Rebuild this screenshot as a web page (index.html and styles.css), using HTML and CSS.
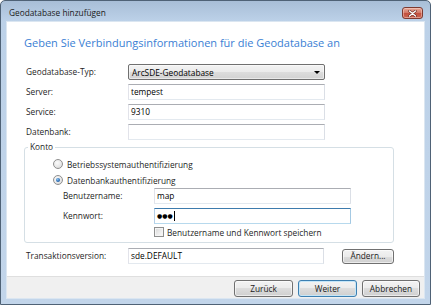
FILE: index.html
```html
<!DOCTYPE html>
<html lang="de">
<head>
<meta charset="utf-8">
<title>Geodatabase hinzufügen</title>
<link rel="stylesheet" href="styles.css">
</head>
<body>
<div class="window">
  <div class="titlebar">
    <span class="title">Geodatabase hinzufügen</span>
    <span class="close">
      <svg width="9" height="7" viewBox="0 0 9 7"><path d="M1.5 1 L7.5 6 M7.5 1 L1.5 6" stroke="#6b2a22" stroke-width="2.6" stroke-linecap="round"/><path d="M1.5 1 L7.5 6 M7.5 1 L1.5 6" stroke="#ffffff" stroke-width="1.4" stroke-linecap="round"/></svg>
    </span>
  </div>
  <div class="client">
    <div class="content">
      <h1 class="heading">Geben Sie Verbindungsinformationen für die Geodatabase an</h1>
      <div class="form">
        <span class="label">Geodatabase-Typ:</span>
        <div class="select"><span>ArcSDE-Geodatabase</span><span class="arrow"></span></div>
        <span class="label">Server:</span>
        <div class="input">tempest</div>
        <span class="label">Service:</span>
        <div class="input">9310</div>
        <span class="label">Datenbank:</span>
        <div class="input"></div>
      </div>
      <fieldset class="group">
        <legend class="legend">Konto</legend>
        <div class="radio-row"><span class="radio"></span><span>Betriebssystemauthentifizierung</span></div>
        <div class="radio-row"><span class="radio checked"></span><span>Datenbankauthentifizierung</span></div>
        <div class="subform">
          <span class="label">Benutzername:</span>
          <div class="input">map</div>
          <span class="label">Kennwort:</span>
          <div class="input focus"><span class="dots">●●●</span><span class="caret"></span></div>
        </div>
        <div class="check-row"><span class="checkbox"></span><span>Benutzername und Kennwort speichern</span></div>
      </fieldset>
      <div class="trans">
        <span class="label">Transaktionsversion:</span>
        <div class="input">sde.DEFAULT</div>
        <button class="btn small">Ändern...</button>
      </div>
    </div>
    <div class="footer">
      <button class="btn">Zurück</button>
      <button class="btn default">Weiter</button>
      <button class="btn narrow">Abbrechen</button>
    </div>
  </div>
</div>
</body>
</html>
```
FILE: styles.css
```css
html, body {
  margin: 0;
  padding: 0;
  background: #ffffff;
}
body {
  font-family: "Open Sans", "Noto Sans", sans-serif;
  font-size: 8.3px;
  color: #1e1e1e;
}
.window {
  width: 431px;
  height: 305px;
  box-sizing: border-box;
  border: 1px solid #4f6276;
  border-radius: 5px 5px 0 0;
  background: linear-gradient(#a8bed7 0px, #bcd1e8 20px, #c2d5ea 100%);
  padding: 0 5px 5px;
  display: flex;
  flex-direction: column;
}
.titlebar {
  height: 20px;
  flex: none;
  display: flex;
  align-items: flex-start;
  justify-content: space-between;
}
.title {
  margin-top: 6px;
  padding-left: 3px;
  line-height: 12px;
  color: #1a1a1a;
}
.close {
  margin-top: 6px;
  margin-right: 2px;
  width: 21px;
  height: 12px;
  box-sizing: border-box;
  border: 1px solid #7d3a31;
  border-radius: 3px;
  background: linear-gradient(#e6a999 0%, #d47968 45%, #c24f3d 50%, #cc6552 100%);
  box-shadow: inset 0 0 0 1px rgba(255, 220, 210, 0.45);
  display: flex;
  align-items: center;
  justify-content: center;
}
.close svg {
  display: block;
}
.client {
  flex: 1;
  border: 1px solid #dbe6f1;
  background: #ffffff;
  display: flex;
  flex-direction: column;
}
.content {
  flex: 1;
  padding: 13px 0 0 17px;
}
.heading {
  margin: 0;
  font-weight: normal;
  font-size: 11px;
  line-height: 15px;
  color: #3a80d4;
}
.form {
  margin: 14px 0 0 2px;
  display: grid;
  grid-template-columns: 102px 197px;
  grid-auto-rows: 16px;
  row-gap: 4px;
  align-items: center;
}
.label {
  line-height: 16px;
}
.input {
  box-sizing: border-box;
  height: 16px;
  border: 1px solid;
  border-color: #abadb3 #dbdfe6 #e3e9ef #e2e3ea;
  padding: 0 2px;
  line-height: 14px;
  color: #000000;
  background: #ffffff;
  display: flex;
  align-items: center;
}
.input.focus {
  border-color: #3d7bad #a4c9e3 #b7d9ed #b5cfe7;
}
.dots {
  font-family: "DejaVu Sans", sans-serif;
  font-size: 6px;
  letter-spacing: 0;
}
.caret {
  width: 1px;
  height: 10px;
  background: #000000;
  margin-left: 1px;
}
.select {
  box-sizing: border-box;
  height: 16px;
  border: 1px solid #707070;
  border-radius: 2px;
  background: linear-gradient(#f3f3f3 0%, #ebebeb 50%, #dddddd 50%, #d2d2d2 100%);
  box-shadow: inset 0 0 0 1px rgba(255, 255, 255, 0.5);
  padding: 0 0 0 3px;
  display: flex;
  align-items: center;
  color: #000000;
}
.arrow {
  margin-left: auto;
  margin-right: 4px;
  width: 0;
  height: 0;
  border-left: 3px solid transparent;
  border-right: 3px solid transparent;
  border-top: 3px solid #000000;
}
.group {
  margin: 1px 0 0 0;
  padding: 0 0 2px 0;
  width: 370px;
  min-width: 0;
  box-sizing: border-box;
  border: 1px solid #d5dfe5;
  border-radius: 3px;
}
.legend {
  margin-left: 3px;
  padding: 0 2px;
  line-height: 12px;
}
.radio-row {
  margin-left: 28px;
  height: 16px;
  display: flex;
  align-items: center;
  gap: 4px;
}
.radio-row:first-of-type {
  margin-top: 3px;
}
.radio {
  width: 10px;
  height: 10px;
  box-sizing: border-box;
  border: 1px solid #8f8f8f;
  border-radius: 50%;
  background: radial-gradient(circle at 40% 35%, #fbfbfb 0%, #e6e6e6 60%, #d0d0d0 100%);
  display: flex;
  align-items: center;
  justify-content: center;
}
.radio.checked::after {
  content: "";
  width: 4px;
  height: 4px;
  border-radius: 50%;
  background: radial-gradient(circle at 40% 35%, #8cc4f0 0%, #2f6fb6 55%, #174f8e 100%);
}
.subform {
  margin-left: 38px;
  display: grid;
  grid-template-columns: 91px 197px;
  grid-auto-rows: 16px;
  row-gap: 4px;
  align-items: center;
}
.check-row {
  margin-left: 129px;
  height: 16px;
  display: flex;
  align-items: center;
  gap: 3px;
}
.checkbox {
  width: 10px;
  height: 10px;
  box-sizing: border-box;
  border: 1px solid #8e8f8f;
  background: linear-gradient(135deg, #d6d6d6 0%, #eeeeee 60%, #fbfbfb 100%);
  box-shadow: inset 0 0 0 1px #f4f4f4;
}
.trans {
  margin: 5px 0 0 2px;
  display: grid;
  grid-template-columns: 102px 196px 52px;
  align-items: center;
}
.trans .btn {
  margin-left: 18px;
}
.btn {
  box-sizing: border-box;
  height: 17px;
  width: 59px;
  padding: 0;
  border: 1px solid #707070;
  border-radius: 3px;
  background: linear-gradient(#f3f3f3 0%, #ebebeb 50%, #dddddd 50%, #cfcfcf 100%);
  box-shadow: inset 0 0 0 1px rgba(255, 255, 255, 0.6);
  font-family: inherit;
  font-size: 8.3px;
  color: #1b1b1b;
  line-height: 14px;
}
.btn.small {
  width: 52px;
  height: 15px;
  line-height: 12px;
}
.btn.narrow {
  width: 58px;
}
.btn.default {
  border-color: #3c7fb1;
  box-shadow: inset 0 0 0 1px #c5e6f8;
}
.footer {
  flex: none;
  height: 22px;
  box-sizing: border-box;
  border-top: 1px solid #dfdfdf;
  background: #f0f0f0;
  padding: 3px 4px 0 0;
  display: flex;
  justify-content: flex-end;
  align-items: flex-start;
  gap: 5px;
}
```
